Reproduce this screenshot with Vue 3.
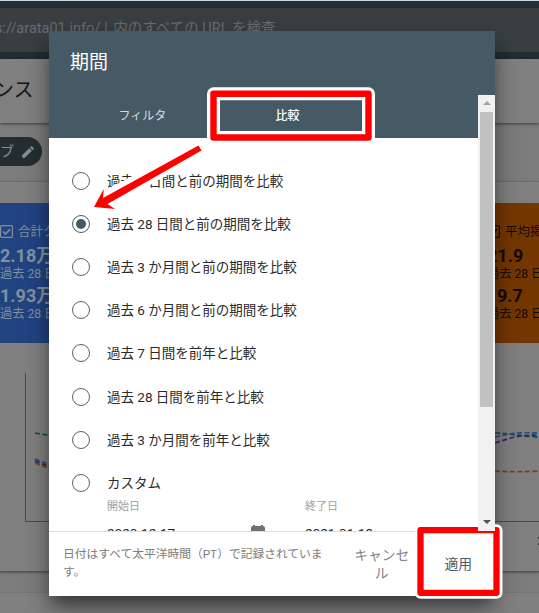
<script setup>
import { ref } from 'vue'

const selected = ref(1)
const options = [
  '過去 7 日間と前の期間を比較',
  '過去 28 日間と前の期間を比較',
  '過去 3 か月間と前の期間を比較',
  '過去 6 か月間と前の期間を比較',
  '過去 7 日間を前年と比較',
  '過去 28 日間を前年と比較',
  '過去 3 か月間を前年と比較',
  'カスタム',
]
</script>

<template>
  <div class="screen">
    <div class="page">
      <header class="topbar">
        <div class="search">s://arata01.info/<span class="caret">|</span>内のすべての URL を検査</div>
      </header>
      <div class="titlebar">ンス</div>
      <div class="filters">
        <div class="chip">
          <span>ブ</span>
          <svg width="14" height="14" viewBox="0 0 24 24"><path d="M2 17.500V22h4.500L18.400 10.100l-4.500-4.500zM21.600 6.900c.6-.6.6-1.300 0-1.900l-2.600-2.600c-.6-.6-1.300-.6-1.900 0l-2 2 4.500 4.500z" fill="currentColor" /></svg>
        </div>
      </div>
      <div class="panel">
        <div class="cards">
          <div class="card blue">
            <div class="metric">
              <svg width="13" height="13" viewBox="0 0 13 13" fill="none" stroke="currentColor"><rect x=".6" y=".6" width="11.800" height="11.800" rx="1" stroke-width="1.200" /><path d="M3 6.500l2.500 2.500L10 4.200" stroke-width="1.600" /></svg>
              <span>合計ク</span>
            </div>
            <b>2.18万</b><small>過去 28 日</small>
            <b>1.93万</b><small>過去 28 日</small>
          </div>
          <div class="card orange">
            <div class="metric">
              <svg width="13" height="13" viewBox="0 0 13 13" fill="none" stroke="currentColor"><rect x=".6" y=".6" width="11.800" height="11.800" rx="1" stroke-width="1.200" /><path d="M3 6.500l2.500 2.500L10 4.200" stroke-width="1.600" /></svg>
              <span>平均掲</span>
            </div>
            <b>21.9</b><small>過去 28 日</small>
            <b class="indent">9.7</b><small>過去 28 日</small>
          </div>
        </div>
        <svg class="chart" width="539" height="228" viewBox="0 343 539 228" fill="none">
          <path d="M25.500 373V521.500H539" stroke="#4b4b4b" />
          <g stroke-width="1.700" stroke-dasharray="5 2.500">
            <path d="M35 433l15 2.500M495 433c14 0 20 3 44 4" stroke="#075149" />
            <path d="M35 459l15 6M495 437c13-3 20-5 44-4" stroke="#2a4b86" />
            <path d="M35 461l15 6M495 443c18-6 25-8 44-8" stroke="#3a2260" />
            <path d="M35 463l15 6M495 471q20 1.500 44 0" stroke="#7b430c" />
          </g>
          <text x="537" y="545" font-size="12" fill="#333">2</text>
        </svg>
      </div>
      <div class="next-panel"></div>
    </div>

    <section class="dialog">
      <h1>期間</h1>
      <div class="scroller">
        <div class="content">
          <nav class="tabs"><span>フィルタ</span><span class="active">比較</span></nav>
          <div class="options">
            <div v-for="(label, i) in options" :key="i" class="option" @click="selected = i">
              <span class="radio" :class="{ checked: selected === i }"></span>
              <span class="label">{{ label }}</span>
            </div>
            <div class="dates">
              <div class="date"><label>開始日</label><span>2020-12-17</span></div>
              <svg class="calendar" width="14" height="15" viewBox="0 0 14 15"><path d="M2 0h2v1h6V0h2v1q2 0 2 2v12H0V3q0-2 2-2z" fill="#707070" /></svg>
              <div class="date"><label>終了日</label><span>2021-01-13</span></div>
            </div>
          </div>
        </div>
        <div class="scrollbar">
          <i class="up"></i>
          <div class="thumb"></div>
          <i class="down"></i>
        </div>
      </div>
      <footer>
        <p>日付はすべて太平洋時間（PT）で記録されています。</p>
        <button class="cancel">キャンセル</button>
        <button class="apply">適用</button>
      </footer>
    </section>

    <svg class="marks" width="539" height="613" viewBox="0 0 539 613" fill="none">
      <g stroke-linejoin="round">
        <rect x="213.500" y="93.800" width="155" height="43.700" stroke="#fff" stroke-width="13" />
        <rect x="213.500" y="93.800" width="155" height="43.700" stroke="#f00" stroke-width="6.400" />
        <rect x="420.500" y="530.200" width="76" height="62.600" stroke="#fff" stroke-width="12" />
        <rect x="420.500" y="530.200" width="76" height="62.600" stroke="#f00" stroke-width="6.300" />
      </g>
      <path d="M198.500 145.500L103.500 197.500L103.700 189L94 207L115 209L108 203L201.500 150.500Z" stroke="#fff" stroke-width="10" stroke-linejoin="round" />
      <path d="M198.500 145.500L103 198L103.700 189L94 207L115 209L107.500 204L201.500 150.500Z" fill="#f00" />
    </svg>
  </div>
</template>

<style>
body { margin: 0; overflow: hidden; }
</style>

<style scoped>
* { box-sizing: border-box; }
.screen {
  position: relative;
  width: 539px;
  height: 613px;
  overflow: hidden;
  font-family: Roboto, "Noto Sans CJK JP", sans-serif;
  font-weight: 400;
  white-space: nowrap;
}
.page { isolation: isolate; height: 613px; display: flex; flex-direction: column; background: #7c7c7c; }
.topbar { height: 59px; padding: 7px 0; border-top: 1px solid #cfd8dc; background: #232d32; }
.search {
  height: 44px;
  background: #393f41;
  color: #676c6e;
  font-size: 14.500px;
  line-height: 42px;
  text-indent: -5px;
}
.caret { display: inline-block; width: 13px; text-indent: 4px; }
.titlebar {
  height: 64px;
  flex: none;
  background: #808080;
  box-shadow: 0 1px 3px rgba(0, 0, 0, 0.5);
  color: #151515;
  font-size: 20px;
  line-height: 63px;
  text-indent: -6px;
  z-index: 1;
}
.filters { height: 58px; padding-top: 14px; flex: none; }
.chip {
  display: flex;
  align-items: center;
  gap: 7px;
  width: 42px;
  height: 29px;
  border-radius: 0 15px 15px 0;
  background: #232e33;
  color: #8a8e90;
  font-size: 14px;
}
.chip span { margin-top: -3px; }
.panel { height: 391px; flex: none; padding-top: 21px; background: #808080; border-top: 1px solid #6d6d6d; border-bottom: 1px solid #555; box-shadow: 0 1px 2px rgba(0, 0, 0, 0.3); }
.cards { display: flex; justify-content: space-between; height: 140px; }
.card { display: flex; flex-direction: column; width: 160px; padding-top: 18px; overflow: hidden; }
.blue { background: #214380; color: #83909f; }
.orange { width: 52px; background: #743703; color: #150b03; }
.metric { display: flex; align-items: center; gap: 5px; height: 21px; font-size: 12.500px; line-height: 18px; }
.metric svg { flex: none; }
.card b { font-size: 18px; font-weight: 700; line-height: 27px; height: 22px; }
.card small { font-size: 12.200px; line-height: 20px; height: 18px; }
.orange .indent { padding-left: 10px; }
.chart { display: block; }
.next-panel { margin-top: 20px; flex: 1; background: #808080; border-top: 1px solid #747474; }

.dialog {
  position: absolute;
  left: 49px;
  top: 31px;
  display: flex;
  flex-direction: column;
  width: 446px;
  height: 565px;
  background: #fff;
  box-shadow: 0 10px 15px -4px rgba(0, 0, 0, 0.45), 0 14px 26px 1px rgba(0, 0, 0, 0.28);
}
h1 {
  height: 64px;
  margin: 0;
  padding-left: 21px;
  background: #455a64;
  color: #fff;
  font-size: 19px;
  font-weight: 400;
  line-height: 63px;
}
.scroller { display: flex; height: 436px; }
.content { width: 429px; height: 436px; overflow: hidden; }
.tabs { display: grid; grid-template-columns: 187px 103px; justify-content: start; height: 43px; width: 446px; background: #455a64; color: #d5dce0; font-size: 12px; line-height: 43px; text-align: center; }
.tabs .active { color: #fff; font-weight: 500; }
.options { padding: 21.500px 0 0 23px; }
.option { display: flex; align-items: center; gap: 17px; height: 43.100px; color: #2b2b2b; font-size: 13.500px; }
.label { margin-top: -2px; }
.radio { display: flex; align-items: center; justify-content: center; width: 18px; height: 18px; border: 1px solid #606060; border-radius: 50%; }
.radio.checked { border: 1.500px solid #455a64; }
.radio.checked::after { content: ""; width: 10px; height: 10px; border-radius: 50%; background: #455a64; }
.dates { display: flex; margin: -6px 0 0 35px; }
.date { display: flex; flex-direction: column; gap: 11px; width: 144px; color: #222; font-size: 13.500px; }
.date label { height: 18px; color: #a0a0a0; font-size: 11px; line-height: 18px; }
.date span { height: 16px; line-height: 13px; }
.calendar { margin: 27px 40px 0 0; }
.scrollbar { display: flex; flex-direction: column; align-items: center; width: 17px; height: 436px; background: #f1f1f1; z-index: 1; }
.up, .down { width: 0; height: 0; border: 4px solid transparent; }
.up { margin: 2px 0 7px; border-bottom-color: #a3a3a3; }
.thumb { width: 13px; height: 295px; background: #c1c1c1; }
.down { margin: auto 0 3px; border-top-color: #505050; }
footer { display: flex; height: 65px; border-top: 1px solid #ddd; }
footer p { width: 277px; margin: 13px 0 0 14px; color: #7c7c7c; font-size: 11.750px; line-height: 18px; white-space: normal; }
button { padding: 0; border: 0; background: none; color: #858585; font: inherit; font-size: 13.800px; line-height: 18px; }
.cancel { width: 56px; margin-left: 16px; white-space: normal; }
.apply { width: 74px; margin-left: 12px; color: #455a64; }
.marks { position: absolute; left: 0; top: 0; pointer-events: none; }
</style>
